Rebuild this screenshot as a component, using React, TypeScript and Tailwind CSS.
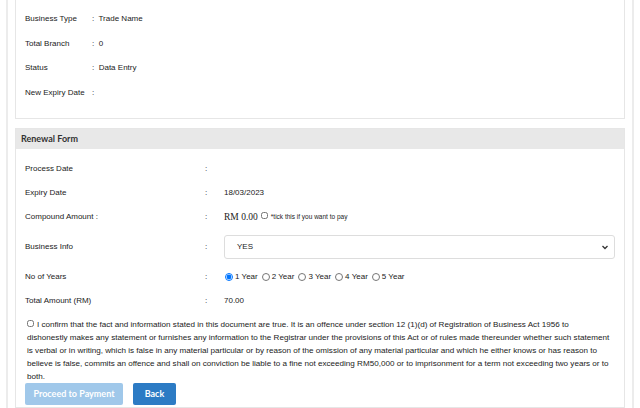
import React, { useState } from "react";

const font = { fontFamily: "'Liberation Sans', Arial, sans-serif" };

const Row = ({ label, children, cls = "h-[24px]" }: { label: string; children?: React.ReactNode; cls?: string }) => (
  <div className={"flex items-center " + cls}>
    <div className="w-[180px] shrink-0 whitespace-nowrap">{label}</div>
    <div className="w-[19px] shrink-0">:</div>
    <div className="flex-1 flex items-center">{children}</div>
  </div>
);

const declaration = [
  "I confirm that the fact and information stated in this document are true. It is an offence under section 12 (1)(d) of Registration of Business Act 1956 to",
  "dishonestly makes any statement or furnishes any information to the Registrar under the provisions of this Act or of rules made thereunder whether such statement",
  "is verbal or in writing, which is false in any material particular or by reason of the omission of any material particular and which he either knows or has reason to",
  "believe is false, commits an offence and shall on conviction be liable to a fine not exceeding RM50,000 or to imprisonment for a term not exceeding two years or to",
  "both.",
];

const App: React.FC = () => {
  const [years, setYears] = useState(1);
  const [confirm, setConfirm] = useState(false);

  return (
    <div className="w-[640px] h-[408px] overflow-hidden bg-white text-[8px] text-[#222]" style={font}>
      <div className="ml-[6px] mr-[6px] h-full border-l-2 border-r-2 border-[#ececec] pl-[7px] pr-[7px] flex flex-col">
        {/* top panel */}
        <div className="border-x border-b border-[#e6e6e6] pt-[7px] pb-[13px] pl-[9px]">
          {[
            ["Business Type", ": Trade Name"],
            ["Total Branch", ": 0"],
            ["Status", ": Data Entry"],
            ["New Expiry Date", ":"],
          ].map(([l, v]) => (
            <div key={l} className="flex items-center h-[24.5px]">
              <div className="w-[67px] shrink-0 whitespace-nowrap">{l}</div>
              <div className="whitespace-pre">{v.replace(": ", ":  ")}</div>
            </div>
          ))}
        </div>

        {/* renewal form */}
        <div className="mt-[9px] border border-[#e6e6e6] flex-1">
          <div className="h-[20px] bg-[#e8e8e8] flex items-center pl-[5px] font-bold text-[#333] text-[9px]" style={{ fontFamily: "Lato, sans-serif" }}>
            Renewal Form
          </div>
          <div className="px-[9px] pt-[8px]">
            <Row label="Process Date" />
            <Row label="Expiry Date">18/03/2023</Row>
            <Row label="Compound Amount :">
              <span className="text-[9.5px]" style={{ fontFamily: "'Liberation Serif', serif" }}>RM 0.00</span>
              <input type="checkbox" className="ml-[3px] w-[7px] h-[7px] m-0 -mt-[3px]" />
              <span className="ml-[3px] text-[6.5px]">*tick this if you want to pay</span>
            </Row>
            <Row label="Business Info" cls="h-[36px]">
              <div className="w-[391px] h-[24px] border border-[#ddd] rounded-[3px] flex items-center justify-between pl-[12px] pr-[5px]">
                <span>YES</span>
                <svg width="8" height="8" viewBox="0 0 8 8">
                  <path d="M1.5 3 L4 5.5 L6.5 3" stroke="#333" strokeWidth="1.3" fill="none" />
                </svg>
              </div>
            </Row>
            <Row label="No of Years">
              {[1, 2, 3, 4, 5].map((y) => (
                <label key={y} className="flex items-center mr-[3px]">
                  <input
                    type="radio"
                    name="years"
                    checked={years === y}
                    onChange={() => setYears(y)}
                    className="w-[8px] h-[8px] m-0 mr-[2px] ml-[1px]"
                  />
                  {y} Year
                </label>
              ))}
            </Row>
            <Row label="Total Amount (RM)">70.00</Row>

            <div className="mt-[5px] leading-[13px] pl-[2px] text-[8.1px]">
              {declaration.map((line, i) => (
                <div key={i} className="whitespace-nowrap">
                  {i === 0 && (
                    <input
                      type="checkbox"
                      checked={confirm}
                      onChange={() => setConfirm(!confirm)}
                      className="w-[7px] h-[7px] m-0 mr-[3px]"
                    />
                  )}
                  {line}
                </div>
              ))}
            </div>

            <div className="flex gap-[10px] mt-0" style={{ fontFamily: "Lato, sans-serif" }}>
              <button className="w-[98px] h-[22px] rounded-[2px] bg-[#a0c8ea] text-white font-bold text-[9px]" disabled={!confirm}>
                Proceed to Payment
              </button>
              <button className="w-[43px] h-[22px] rounded-[2px] bg-[#2c7bc4] text-white font-bold text-[9px]">
                Back
              </button>
            </div>
          </div>
        </div>
      </div>
    </div>
  );
};

export default App;
